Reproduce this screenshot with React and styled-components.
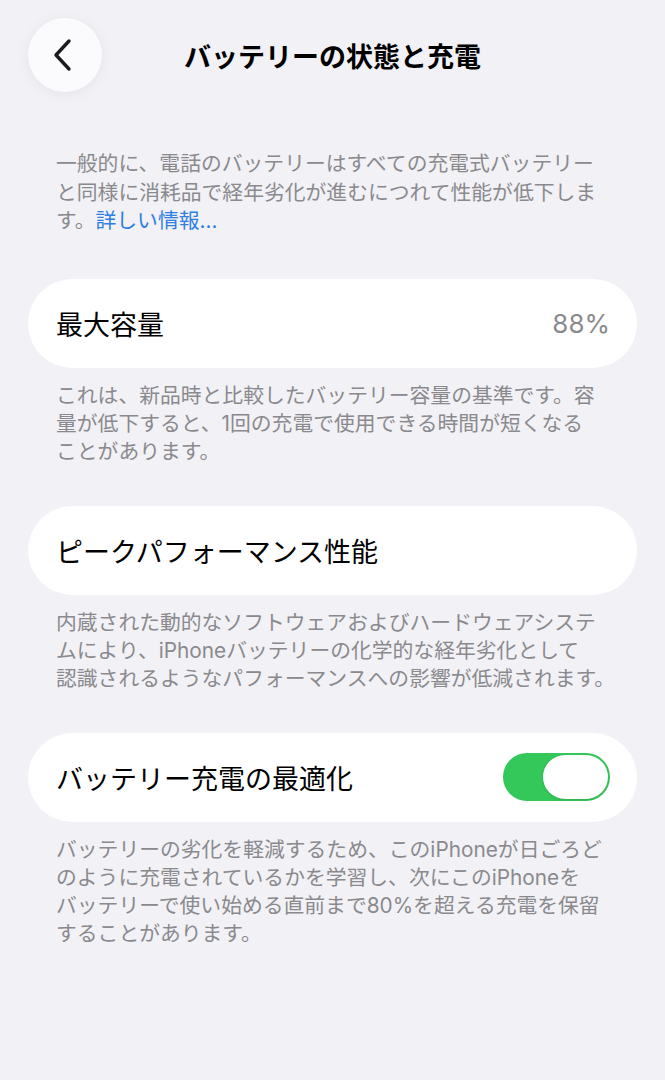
import styled, { createGlobalStyle } from "styled-components"

const GlobalStyle = createGlobalStyle`
  html, body {
    margin: 0;
    padding: 0;
    background: #f2f1f6;
  }
  body {
    font-family: "Inter", "Noto Sans CJK JP", sans-serif;
    -webkit-font-smoothing: antialiased;
  }
`

const Page = styled.main`
  min-height: 1080px;
  padding: 18px 28px 40px;
  box-sizing: border-box;
  background: #f2f1f6;
`

const Header = styled.header`
  display: grid;
  grid-template-columns: 74px 1fr 74px;
  align-items: center;
  height: 74px;
`

const BackButton = styled.button`
  width: 74px;
  height: 74px;
  border: none;
  border-radius: 50%;
  background: #fbfbfd;
  box-shadow: 0 2px 14px rgba(0, 0, 0, 0.06);
  display: flex;
  align-items: center;
  justify-content: center;
  padding: 0;
  padding-right: 4px;
`

const Title = styled.h1`
  margin: 0;
  text-align: center;
  font-size: 27px;
  font-weight: 700;
  color: #000;
  letter-spacing: 0;
`

const Intro = styled.p`
  margin: 58px 0 0;
  padding: 0 28px;
  font-size: 20.8px;
  line-height: 28.5px;
  color: #8a8a8e;
  white-space: nowrap;
`

const Link = styled.a`
  color: #2f7fe0;
  text-decoration: none;
`

const Section = styled.section`
  margin-top: ${(p) => p.$top}px;
`

const Card = styled.div`
  height: 89px;
  border-radius: 44.5px;
  background: #fff;
  display: flex;
  align-items: center;
  justify-content: space-between;
  padding: 0 27px 0 28px;
  box-sizing: border-box;
`

const Label = styled.span`
  font-size: 27px;
  color: #000;
`

const Value = styled.span`
  font-size: 26px;
  color: #8a8a8e;
`

const Footer = styled.p`
  margin: 14px 0 0;
  padding: 0 28px;
  font-size: 20.8px;
  line-height: 28px;
  color: #8a8a8e;
  white-space: nowrap;
`

const Toggle = styled.div`
  width: 107px;
  height: 48px;
  border-radius: 24px;
  background: ${(p) => (p.$on ? "#34c759" : "#e9e9eb")};
  display: flex;
  align-items: center;
  justify-content: ${(p) => (p.$on ? "flex-end" : "flex-start")};
  padding: 2px;
  box-sizing: border-box;
`

const Knob = styled.div`
  width: 65px;
  height: 44px;
  border-radius: 22px;
  background: #fff;
  box-shadow: 0 1px 3px rgba(0, 0, 0, 0.12);
`

const Chevron = () => (
  <svg width="24" height="34" viewBox="0 0 24 34" fill="none">
    <path
      d="M18 3 L5 17 L18 31"
      stroke="#1c1c1e"
      strokeWidth="3.4"
      strokeLinecap="round"
      strokeLinejoin="round"
    />
  </svg>
)

const App = () => {
  return (
    <>
      <GlobalStyle />
      <Page>
        <Header>
          <BackButton aria-label="戻る">
            <Chevron />
          </BackButton>
          <Title>バッテリーの状態と充電</Title>
          <span />
        </Header>

        <Intro>
          一般的に、電話のバッテリーはすべての充電式バッテリー
          <br />
          と同様に消耗品で経年劣化が進むにつれて性能が低下しま
          <br />
          す。<Link href="#">詳しい情報...</Link>
        </Intro>

        <Section $top={43}>
          <Card>
            <Label>最大容量</Label>
            <Value>88%</Value>
          </Card>
          <Footer>
            これは、新品時と比較したバッテリー容量の基準です。容
            <br />
            量が低下すると、1回の充電で使用できる時間が短くなる
            <br />
            ことがあります。
          </Footer>
        </Section>

        <Section $top={40}>
          <Card>
            <Label>ピークパフォーマンス性能</Label>
          </Card>
          <Footer>
            内蔵された動的なソフトウェアおよびハードウェアシステ
            <br />
            ムにより、iPhoneバッテリーの化学的な経年劣化として
            <br />
            認識されるようなパフォーマンスへの影響が低減されます。
          </Footer>
        </Section>

        <Section $top={40}>
          <Card>
            <Label>バッテリー充電の最適化</Label>
            <Toggle $on>
              <Knob />
            </Toggle>
          </Card>
          <Footer>
            バッテリーの劣化を軽減するため、このiPhoneが日ごろど
            <br />
            のように充電されているかを学習し、次にこのiPhoneを
            <br />
            バッテリーで使い始める直前まで80%を超える充電を保留
            <br />
            することがあります。
          </Footer>
        </Section>
      </Page>
    </>
  )
}

export default App
